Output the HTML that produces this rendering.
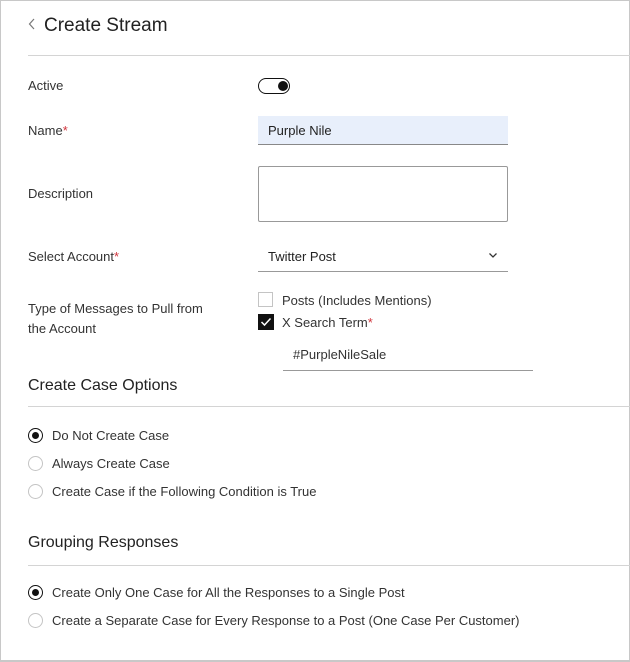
<!DOCTYPE html>
<html><head><style>
*{margin:0;padding:0;box-sizing:border-box}
body{width:630px;height:662px;background:#fff;font-family:"Liberation Sans",sans-serif;color:#333;font-size:13px;position:relative;overflow:hidden}
.frame{position:absolute;left:0;top:0;width:630px;height:662px;border:1px solid #c8c8c8;border-bottom:2px solid #c8c8c8}
.a{position:absolute;white-space:nowrap}
.req{color:#d0343c}
.hr{position:absolute;left:28px;right:0;height:1px;background:#d4d4d4}
.radio{position:absolute;width:15px;height:15px;border-radius:50%;border:1px solid #c4c4c4;background:#fff}
.radio.on{border:1.5px solid #111}
.radio.on::after{content:"";position:absolute;left:2.5px;top:2.5px;width:7px;height:7px;border-radius:50%;background:#111}
</style></head><body>
<div class="frame"></div>
<svg class="a" style="left:28px;top:18px" width="8" height="12" viewBox="0 0 8 12"><path d="M6 1 L1.5 6 L6 11" fill="none" stroke="#777" stroke-width="1.2"/></svg>
<div class="a" style="left:44px;top:15px;font-size:19px;color:#222">Create Stream</div>
<div class="hr" style="top:55px"></div>

<div class="a" style="left:28px;top:78px">Active</div>
<div class="a" style="left:258px;top:78px;width:32px;height:16px;border:1.5px solid #111;border-radius:8px"><div style="position:absolute;right:1.5px;top:1.5px;width:10px;height:10px;border-radius:50%;background:#111"></div></div>

<div class="a" style="left:28px;top:123px">Name<span class="req">*</span></div>
<div class="a" style="left:258px;top:116px;width:250px;height:29px;background:#e8effb;border-bottom:1px solid #888;padding:7px 10px;color:#222">Purple Nile</div>

<div class="a" style="left:28px;top:186px">Description</div>
<div class="a" style="left:258px;top:166px;width:250px;height:56px;border:1px solid #999;border-radius:2px"></div>

<div class="a" style="left:28px;top:249px">Select Account<span class="req">*</span></div>
<div class="a" style="left:268px;top:249px;color:#222">Twitter Post</div>
<svg class="a" style="left:488px;top:251px" width="10" height="8" viewBox="0 0 10 8"><path d="M1.5 2.5 L5 6 L8.5 2.5" fill="none" stroke="#333" stroke-width="1.3"/></svg>
<div class="a" style="left:258px;top:271px;width:250px;height:1px;background:#999"></div>

<div class="a" style="left:28px;top:299px;line-height:20px">Type of Messages to Pull from<br>the Account</div>
<div class="a" style="left:258px;top:292px;width:15px;height:15px;border:1px solid #c4c4c4"></div>
<div class="a" style="left:282px;top:293px">Posts (Includes Mentions)</div>
<div class="a" style="left:258px;top:314px;width:16px;height:16px;background:#111"><svg width="16" height="16"><path d="M3.5 8 L6.5 11 L12.5 4.5" fill="none" stroke="#fff" stroke-width="1.5"/></svg></div>
<div class="a" style="left:282px;top:315px">X Search Term<span class="req">*</span></div>
<div class="a" style="left:293px;top:347px">#PurpleNileSale</div>
<div class="a" style="left:283px;top:370px;width:250px;height:1px;background:#999"></div>

<div class="a" style="left:28px;top:377px;font-size:16px;color:#222">Create Case Options</div>
<div class="hr" style="top:406px"></div>
<div class="radio on" style="left:28px;top:428px"></div>
<div class="a" style="left:52px;top:428px">Do Not Create Case</div>
<div class="radio" style="left:28px;top:456px"></div>
<div class="a" style="left:52px;top:456px">Always Create Case</div>
<div class="radio" style="left:28px;top:484px"></div>
<div class="a" style="left:52px;top:484px">Create Case if the Following Condition is True</div>

<div class="a" style="left:28px;top:534px;font-size:16px;color:#222">Grouping Responses</div>
<div class="hr" style="top:565px"></div>
<div class="radio on" style="left:28px;top:585px"></div>
<div class="a" style="left:52px;top:585px">Create Only One Case for All the Responses to a Single Post</div>
<div class="radio" style="left:28px;top:613px"></div>
<div class="a" style="left:52px;top:613px">Create a Separate Case for Every Response to a Post (One Case Per Customer)</div>
</body></html>
